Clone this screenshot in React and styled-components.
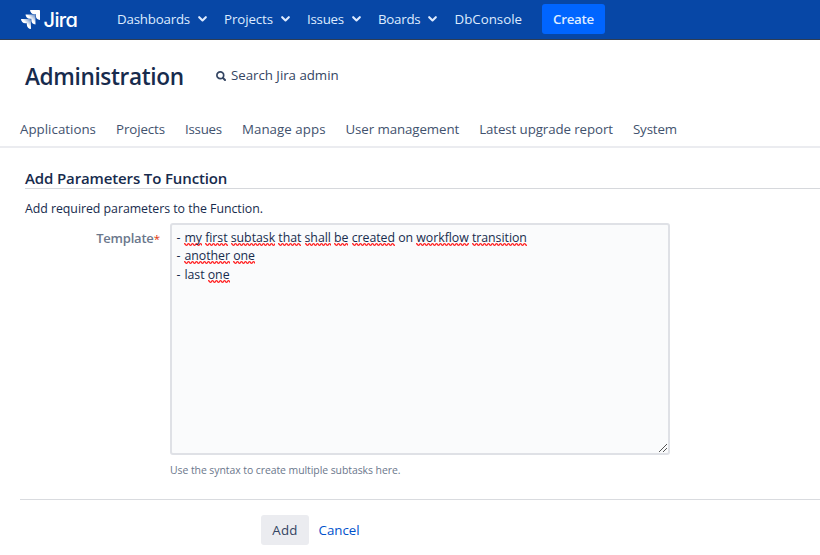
import React from "react";
import styled, { createGlobalStyle } from "styled-components";

const GlobalStyle = createGlobalStyle`
  body {
    margin: 0;
    background: #fff;
    color: #172b4d;
    font-family: "Open Sans", "Noto Sans", sans-serif;
    font-size: 13.3px;
    overflow: hidden;
  }
`;

const Page = styled.div`
  display: flex;
  flex-direction: column;
  height: 555px;
  overflow: hidden;
`;

const Header = styled.header`
  display: flex;
  align-items: center;
  box-sizing: border-box;
  height: 40px;
  padding: 0 0 1px 21px;
  background: #0747a6;
  border-bottom: 1px solid #2e3d54;
  color: #deebff;
`;

const Brand = styled.a`
  display: flex;
  align-items: center;
  width: 96px;
  gap: 3.5px;
  color: #fff;
`;

const BrandName = styled.span`
  padding-top: 1px;
  font: 500 20px/24px Inter, sans-serif;
  font-feature-settings: "cv11";
  letter-spacing: -0.6px;
`;

const Label = styled.span`
  letter-spacing: ${(p) => p.$track || 0}px;
  white-space: nowrap;
`;

const MainNav = styled.nav`
  display: flex;
  align-items: center;
  line-height: 20px;
`;

const MenuItem = styled.a`
  display: flex;
  align-items: center;
  gap: 8px;
  padding-right: ${(p) => (p.$plain ? 20 : 17)}px;

  svg {
    width: 9px;
    height: 6px;
  }
`;

const CreateButton = styled.button`
  width: 63px;
  height: 30px;
  padding: 0;
  border: 0;
  border-radius: 3px;
  background: #0065ff;
  color: #deebff;
  font: inherit;
  font-weight: 600;
`;

const AdminBar = styled.section`
  display: flex;
  flex-direction: column;
  box-sizing: border-box;
  height: 108px;
  border-bottom: 2px solid #ebecf0;
`;

const TitleRow = styled.div`
  display: flex;
  align-items: center;
  height: 72px;
  padding-left: 25px;
`;

const Title = styled.h1`
  width: 190.5px;
  margin: 0;
  padding-top: 2px;
  font-size: 22.6px;
  font-weight: 600;
  letter-spacing: -0.36px;
  line-height: 30px;
`;

const SearchLink = styled.a`
  display: flex;
  align-items: center;
  gap: 5.5px;
  padding-bottom: 2px;
  color: #344563;
  line-height: 20px;

  svg {
    width: 10px;
    height: 10px;
    margin-top: 2px;
  }
`;

const Tabs = styled.nav`
  display: flex;
  gap: 20px;
  padding: 7px 0 0 20px;
  color: #42526e;
  line-height: 20px;
`;

const Tab = styled.a`
  flex: none;
`;

const Content = styled.main`
  display: flex;
  flex-direction: column;
`;

const Heading = styled.h2`
  box-sizing: border-box;
  height: 21px;
  margin: 20px 0 0 25px;
  border-bottom: 1px solid #d6d8dc;
  font-size: 15px;
  font-weight: 600;
  line-height: 20px;
`;

const Intro = styled.p`
  margin: 10px 0 0 25px;
  font-size: 12.35px;
  line-height: 19px;
`;

const Field = styled.div`
  display: grid;
  grid-template-columns: 160px 500px;
  column-gap: 10px;
  margin-top: 5px;
`;

const FieldName = styled.label`
  padding-top: 5px;
  text-align: right;
  color: #6b778c;
  font-size: 13px;
  font-weight: 600;
  line-height: 20px;
`;

const Required = styled.span`
  color: #de350b;
  font-size: 11.5px;
  font-weight: 400;
`;

const Editor = styled.div`
  display: flex;
  box-sizing: border-box;
  height: 232px;
  padding: 3.5px 3px 0 4.5px;
  border: 2px solid #dfe1e6;
  border-radius: 3px;
  background: #fafbfc;
  font-size: 12.35px;
  line-height: 18.57px;
`;

const Lines = styled.div`
  flex: 1;
`;

const Line = styled.div`
  white-space: pre;
  letter-spacing: -0.04px;

  &::first-letter {
    letter-spacing: 0.8px;
  }
`;

const Misspelled = styled.span`
  background-image: linear-gradient(90deg, #f33 1px, #f338 1px 2px, transparent 2px 3px, #f338 3px),
    linear-gradient(90deg, #f338 1px, #f22 1px 2px, #f338 2px 3px, #f22 3px),
    linear-gradient(90deg, transparent 1px, #f338 1px 2px, #f33 2px 3px, #f338 3px);
  background-size: 4px 1px;
  background-repeat: repeat-x;
  background-position: 0 calc(100% - 2px), 0 calc(100% - 1px), 0 100%;
`;

const Grip = styled.svg`
  align-self: flex-end;
  width: 8px;
  height: 8px;
  margin: 0 -2px 1px 0;
`;

const Hint = styled.p`
  margin: 7px 0 0 170px;
  color: #6b778c;
  font-size: 10.45px;
  line-height: 16px;
`;

const Actions = styled.footer`
  display: flex;
  align-items: center;
  gap: 9.5px;
  margin: 21px 0 0 20px;
  padding: 15px 0 0 241px;
  border-top: 1px solid #d9dbdf;
`;

const AddButton = styled.button`
  width: 48px;
  height: 30px;
  padding: 0;
  border: 0;
  border-radius: 3px;
  background: #ebecf0;
  color: #344563;
  font: inherit;
`;

const CancelLink = styled.a`
  color: #0052cc;
`;

const JiraMark = () => (
  <svg width="19" height="19" viewBox="0 0 24 24">
    <defs>
      <linearGradient id="fade" x1="1" y1="0" x2="0.4" y2="0.6">
        <stop offset="0.15" stopColor="#fff" stopOpacity="0.45" />
        <stop offset="0.75" stopColor="#fff" />
      </linearGradient>
    </defs>
    <path fill="#fff" d="M23.013 0H11.455a5.215 5.215 0 0 0 5.215 5.215h2.129v2.057A5.215 5.215 0 0 0 24 12.483V1.005A1.001 1.001 0 0 0 23.013 0Z" />
    <path fill="url(#fade)" d="M17.294 5.757H5.736a5.215 5.215 0 0 0 5.215 5.214h2.129v2.058a5.218 5.218 0 0 0 5.215 5.214V6.758a1.001 1.001 0 0 0-1.001-1.001Z" />
    <path fill="url(#fade)" d="M11.571 11.513H0a5.218 5.218 0 0 0 5.232 5.215h2.13v2.057A5.215 5.215 0 0 0 12.575 24V12.518a1.005 1.005 0 0 0-1.005-1.005Z" />
  </svg>
);

const Chevron = () => (
  <svg viewBox="0 0 9 6" fill="none" stroke="currentColor" strokeWidth="2.1" strokeLinecap="round" strokeLinejoin="round">
    <path d="M1.2 1.2 4.5 4.5 7.8 1.2" />
  </svg>
);

const SearchIcon = () => (
  <svg viewBox="0 0 10 10" fill="none" stroke="currentColor" strokeLinecap="round">
    <circle cx="4.3" cy="4.3" r="3.4" strokeWidth="1.7" />
    <path d="M7 7 9 9" strokeWidth="2" />
  </svg>
);

const MENUS = [
  { name: "Dashboards", track: -0.195 },
  { name: "Projects", track: -0.09 },
  { name: "Issues", track: -0.23 },
  { name: "Boards", track: -0.23 },
];

const TABS = [
  { name: "Applications", track: 0.02 },
  { name: "Projects", track: -0.09 },
  { name: "Issues", track: -0.23 },
  { name: "Manage apps", track: 0.05 },
  { name: "User management", track: -0.09 },
  { name: "Latest upgrade report", track: -0.09 },
  { name: "System", track: -0.13 },
];

const TEMPLATE = ["- *my *first *subtask *that *shall *be *created on *workflow *transition", "- *another *one", "- last *one"];

const renderWords = (line) =>
  line.split(" ").map((word, i) => (
    <React.Fragment key={i}>
      {i > 0 && " "}
      {word.startsWith("*") ? <Misspelled>{word.slice(1)}</Misspelled> : word}
    </React.Fragment>
  ));

export default function App() {
  return (
    <Page>
      <GlobalStyle />
      <Header>
        <Brand>
          <JiraMark />
          <BrandName>Jira</BrandName>
        </Brand>
        <MainNav>
          {MENUS.map((m) => (
            <MenuItem key={m.name}>
              <Label $track={m.track}>{m.name}</Label>
              <Chevron />
            </MenuItem>
          ))}
          <MenuItem $plain>
            <Label>DbConsole</Label>
          </MenuItem>
          <CreateButton>
            <Label $track={-0.25}>Create</Label>
          </CreateButton>
        </MainNav>
      </Header>
      <AdminBar>
        <TitleRow>
          <Title>Administration</Title>
          <SearchLink>
            <SearchIcon />
            <Label $track={-0.03}>Search Jira admin</Label>
          </SearchLink>
        </TitleRow>
        <Tabs>
          {TABS.map((t) => (
            <Tab key={t.name}>
              <Label $track={t.track}>{t.name}</Label>
            </Tab>
          ))}
        </Tabs>
      </AdminBar>
      <Content>
        <Heading>
          <Label $track={-0.13}>Add Parameters To Function</Label>
        </Heading>
        <Intro>
          <Label $track={-0.04}>Add required parameters to the Function.</Label>
        </Intro>
        <Field>
          <FieldName>
            <Label $track={-0.2}>Template</Label>
            <Required>*</Required>
          </FieldName>
          <Editor role="textbox">
            <Lines>
              {TEMPLATE.map((line) => (
                <Line key={line}>{renderWords(line)}</Line>
              ))}
            </Lines>
            <Grip viewBox="0 0 8 8" stroke="#555" strokeWidth="1">
              <path d="M0 8 8 0M4 8 8 4" />
            </Grip>
          </Editor>
        </Field>
        <Hint>
          <Label $track={-0.06}>Use the syntax to create multiple subtasks here.</Label>
        </Hint>
        <Actions>
          <AddButton>
            <Label $track={0.25}>Add</Label>
          </AddButton>
          <CancelLink>Cancel</CancelLink>
        </Actions>
      </Content>
    </Page>
  );
}
